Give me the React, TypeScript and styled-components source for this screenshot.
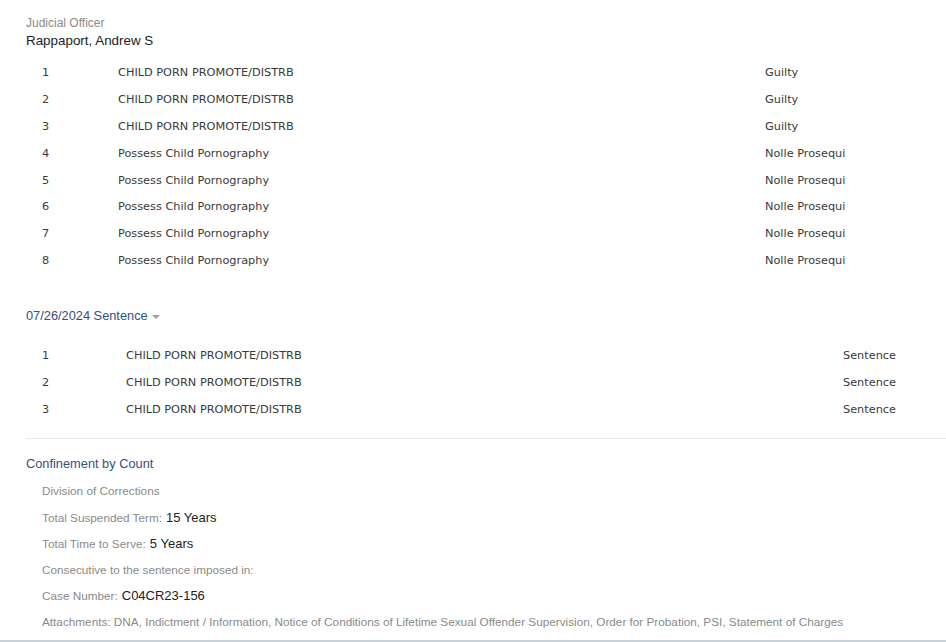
import styled, { createGlobalStyle } from "styled-components";

const GlobalStyle = createGlobalStyle`
  body {
    margin: 0;
    background: #fff;
    font-family: "Liberation Sans", Arial, sans-serif;
  }
`

const Page = styled.div`
  width: 946px;
  height: 642px;
  box-sizing: border-box;
  padding: 16px 0 0 26px;
  border-bottom: 2px solid #c9d1d9;
  overflow: hidden;
`

const FieldLabel = styled.div`
  font-size: 12px;
  line-height: 14px;
  color: #8a8a8a;
`

const OfficerName = styled.div`
  margin-top: 2px;
  font-size: 13.4px;
  line-height: 17px;
  color: #222;
`

const Table = styled.div<{ $top: number }>`
  margin-top: ${(p) => p.$top}px;
  padding-left: 16px;
`

const Row = styled.div<{ $cols: string }>`
  display: grid;
  grid-template-columns: ${(p) => p.$cols};
  align-items: center;
  height: 26.9px;
  font-family: "DejaVu Sans", Verdana, sans-serif;
  font-size: 11.3px;
  color: #3a3a3a;
`

const SectionHeader = styled.div<{ $top: number }>`
  margin-top: ${(p) => p.$top}px;
  display: flex;
  align-items: center;
  gap: 4px;
  font-size: 12.8px;
  line-height: 17px;
  color: #34507e;
`

const Caret = styled.span`
  width: 0;
  height: 0;
  margin-top: 2px;
  border-left: 4px solid transparent;
  border-right: 4px solid transparent;
  border-top: 4px solid #a0a0a0;
`

const Divider = styled.div`
  margin-top: 15px;
  border-top: 1px solid #e6e6e6;
`

const DetailList = styled.div`
  margin-top: 6px;
  padding-left: 16px;
`

const Detail = styled.div`
  height: 26.2px;
  display: flex;
  align-items: center;
  gap: 4px;
  font-size: 11.75px;
  color: #8a8a8a;
  white-space: nowrap;
`

const Value = styled.span`
  font-size: 13px;
  color: #222;
`

const charges = [
  ["1", "CHILD PORN PROMOTE/DISTRB", "Guilty"],
  ["2", "CHILD PORN PROMOTE/DISTRB", "Guilty"],
  ["3", "CHILD PORN PROMOTE/DISTRB", "Guilty"],
  ["4", "Possess Child Pornography", "Nolle Prosequi"],
  ["5", "Possess Child Pornography", "Nolle Prosequi"],
  ["6", "Possess Child Pornography", "Nolle Prosequi"],
  ["7", "Possess Child Pornography", "Nolle Prosequi"],
  ["8", "Possess Child Pornography", "Nolle Prosequi"],
]

const sentences = [
  ["1", "CHILD PORN PROMOTE/DISTRB", "Sentence"],
  ["2", "CHILD PORN PROMOTE/DISTRB", "Sentence"],
  ["3", "CHILD PORN PROMOTE/DISTRB", "Sentence"],
]

const App: React.FC = () => {
  return (
    <>
      <GlobalStyle />
      <Page>
        <FieldLabel>Judicial Officer</FieldLabel>
        <OfficerName>Rappaport, Andrew S</OfficerName>

        <Table $top={10}>
          {charges.map(([num, desc, disp]) => (
            <Row key={num} $cols="76px 647px auto">
              <span>{num}</span>
              <span>{desc}</span>
              <span>{disp}</span>
            </Row>
          ))}
        </Table>

        <SectionHeader $top={33}>
          07/26/2024 Sentence <Caret />
        </SectionHeader>

        <Table $top={18}>
          {sentences.map(([num, desc, disp]) => (
            <Row key={num} $cols="84px 717px auto">
              <span>{num}</span>
              <span>{desc}</span>
              <span>{disp}</span>
            </Row>
          ))}
        </Table>

        <Divider />

        <SectionHeader $top={16}>Confinement by Count</SectionHeader>

        <DetailList>
          <Detail>Division of Corrections</Detail>
          <Detail>
            Total Suspended Term: <Value>15 Years</Value>
          </Detail>
          <Detail>
            Total Time to Serve: <Value>5 Years</Value>
          </Detail>
          <Detail>Consecutive to the sentence imposed in:</Detail>
          <Detail>
            Case Number: <Value>C04CR23-156</Value>
          </Detail>
          <Detail>
            Attachments: DNA, Indictment / Information, Notice of Conditions of Lifetime Sexual Offender Supervision, Order for Probation, PSI, Statement of Charges
          </Detail>
        </DetailList>
      </Page>
    </>
  )
}
export default App
